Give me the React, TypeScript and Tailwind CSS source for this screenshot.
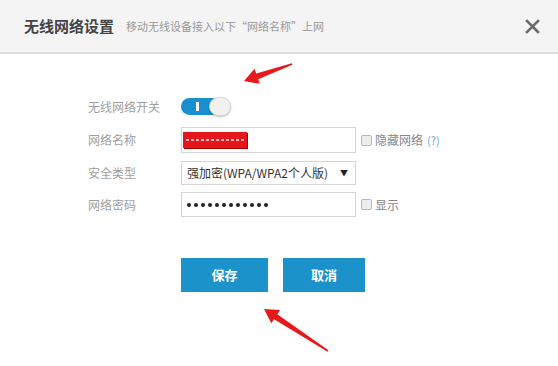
import React from 'react';

const font = { fontFamily: '"Noto Sans CJK SC", "Noto Sans", sans-serif' };

function Arrow({ x1, y1, x2, y2 }: { x1: number; y1: number; x2: number; y2: number }) {
  // tail (x1,y1) -> tip (x2,y2)
  const dx = x2 - x1;
  const dy = y2 - y1;
  const len = Math.hypot(dx, dy);
  const ux = dx / len;
  const uy = dy / len;
  const px = -uy;
  const py = ux;
  const head = 14;
  const hw = 8;
  const bx = x2 - ux * head;
  const by = y2 - uy * head;
  const pts = [
    [x1 + px * 0.8, y1 + py * 0.8],
    [bx + px * 3, by + py * 3],
    [bx + px * hw, by + py * hw],
    [x2, y2],
    [bx - px * hw, by - py * hw],
    [bx - px * 3, by - py * 3],
    [x1 - px * 0.8, y1 - py * 0.8],
  ]
    .map((p) => p.join(','))
    .join(' ');
  return <polygon points={pts} fill="#e8191c" />;
}

function Checkbox() {
  return <span className="inline-block h-[11px] w-[11px] rounded-[2px] border border-[#b8b8b8] bg-[#eeeeee]" />;
}

const dots = Array.from({ length: 12 });

export default function App() {
  return (
    <div className="relative h-[366px] w-[558px] overflow-hidden bg-white" style={font}>
      {/* 标题栏 */}
      <div className="flex h-[54px] items-center border-b-2 border-[#dedede] bg-[#f4f4f4] pl-6 pr-[18px]">
        <span className="text-[15px] font-bold text-[#444]">无线网络设置</span>
        <span className="ml-[12px] text-[11px] text-[#999]">移动无线设备接入以下“网络名称”上网</span>
        <button className="ml-auto text-[#666]">
          <svg width="15" height="15" viewBox="0 0 15 15">
            <path d="M2 2L13 13M13 2L2 13" stroke="#6b6b6b" strokeWidth="2.6" strokeLinecap="square" />
          </svg>
        </button>
      </div>

      {/* 表单 */}
      <div className="pl-[88px] pt-[44px] text-[12px]">
        <div className="flex h-[17px] items-center">
          <span className="w-[93px] text-[#a0a0a0]">无线网络开关</span>
          <div className="relative h-[17px] w-[50px]">
            <div className="absolute left-0 top-0 h-[17px] w-[40px] rounded-full bg-[#1a8fd0]">
              <span className="absolute left-[15px] top-[4px] h-[9px] w-[3px] bg-white" />
            </div>
            <span className="absolute right-0 top-[-1px] h-[19px] w-[22px] rounded-full border border-[#d8d8d8] bg-[#f1f1f1] shadow-[0_1px_2px_rgba(0,0,0,0.25)]" />
          </div>
        </div>

        <div className="mt-[12px] flex h-[26px] items-center">
          <span className="w-[93px] text-[#a0a0a0]">网络名称</span>
          <div className="flex h-[26px] w-[175px] items-center border border-[#d4d4d4] bg-white pl-[1px]">
            <div className="flex h-[16px] w-[64px] items-center justify-center gap-[2px] bg-[#e5161b] shadow-[1px_1px_0_#a00]">
              {dots.map((_, i) => (
                <span key={i} className="h-[2px] w-[3px] bg-[#ffb4b4]" />
              ))}
            </div>
          </div>
          <span className="ml-[5px] flex items-center">
            <Checkbox />
          </span>
          <span className="ml-[3px] text-[#888]">隐藏网络</span>
          <span className="ml-[4px] text-[11px] text-[#6aa6d8]">(?)</span>
        </div>

        <div className="mt-[8px] flex h-[24px] items-center">
          <span className="w-[93px] text-[#a0a0a0]">安全类型</span>
          <div className="flex h-[24px] w-[175px] items-center justify-between border border-[#d4d4d4] bg-white pl-[5px] pr-[7px] text-[#333]">
            <span>强加密(WPA/WPA2个人版)</span>
            <span className="text-[8px] text-[#222]">▼</span>
          </div>
        </div>

        <div className="mt-[7px] flex h-[25px] items-center">
          <span className="w-[93px] text-[#a0a0a0]">网络密码</span>
          <div className="flex h-[25px] w-[175px] items-center gap-[3px] border border-[#d4d4d4] bg-white pl-[5px]">
            {dots.map((_, i) => (
              <span key={i} className="h-[4px] w-[4px] rounded-full bg-[#222]" />
            ))}
          </div>
          <span className="ml-[5px] flex items-center">
            <Checkbox />
          </span>
          <span className="ml-[3px] text-[#888]">显示</span>
        </div>

        <div className="mt-[41px] flex gap-[15px] pl-[93px]">
          <button className="h-[34px] w-[87px] bg-[#1b92c9] text-[13px] font-bold text-white">保存</button>
          <button className="h-[34px] w-[82px] bg-[#1b92c9] text-[13px] font-bold text-white">取消</button>
        </div>
      </div>

      {/* 红色箭头标注 */}
      <svg className="pointer-events-none absolute left-0 top-0" width="558" height="366">
        <Arrow x1={292} y1={64} x2={244} y2={81} />
        <Arrow x1={328} y1={351} x2={264} y2={309} />
      </svg>
    </div>
  );
}
